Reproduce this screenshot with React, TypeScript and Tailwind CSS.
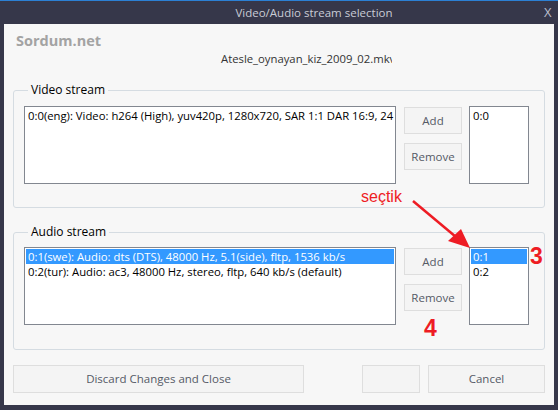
import React from 'react';

const ui = { fontFamily: '"Open Sans", "Noto Sans", sans-serif' };
const mark = { fontFamily: '"Liberation Sans", Arial, sans-serif' };

function ListBox({ rows, selected, wide }: { rows: string[]; selected?: number; wide?: boolean }) {
  return (
    <div className={`${wide ? 'w-[372px]' : 'w-[60px]'} h-[78px] bg-white border border-[#828790] overflow-hidden p-px`}>
      {rows.map((r, i) => (
        <div
          key={i}
          className={`h-[15px] leading-[15px] pl-[2px] whitespace-nowrap text-[11.3px] ${i === selected ? 'bg-[#3399ff] text-white' : 'text-black'}`}
        >
          {r}
        </div>
      ))}
    </div>
  );
}

function Btn({ label, className }: { label: string; className: string }) {
  return (
    <div className={`flex items-center justify-center bg-[#f4f4f4] border border-[#dedede] text-[11.5px] text-[#555a66] ${className}`}>
      {label}
    </div>
  );
}

function Group({ title, list, side, sel, top }: { title: string; list: string[]; side: string[]; sel?: number; top: string }) {
  return (
    <fieldset className="w-[532px] h-[126px] border border-[#d5dce2] rounded-[3px] ml-[9px] px-[10px]">
      <legend className="ml-[4px] px-[3px] text-[12px] text-black leading-[16px]">{title}</legend>
      <div className={`flex ${top}`}>
        <ListBox rows={list} selected={sel} wide />
        <div className="flex flex-col gap-[9px] ml-[8px] w-[58px] h-[78px]">
          <Btn label="Add" className="h-[27px] mt-px" />
          <Btn label="Remove" className="h-[27px]" />
        </div>
        <div className="ml-[7px]">
          <ListBox rows={side} selected={sel} />
        </div>
      </div>
    </fieldset>
  );
}

export default function App() {
  return (
    <div className="w-[558px] h-[410px] bg-[#36374a] border-t border-[#2c80d4] flex flex-col relative" style={ui}>
      <div className="h-[23px] flex items-center relative">
        <div className="flex-1 text-center text-[11.5px] text-[#c9ccd6] pl-[84px]">Video/Audio stream selection</div>
        <div className="w-[14px] text-[13px] text-[#b9bdcc]">X</div>
      </div>
      <div className="ml-[4px] w-[550px] h-[381px] bg-[#f7f7f7] relative">
        <div className="pl-[12px] pt-[7px] text-[14.5px] font-bold text-[#a3a3a3] leading-[20px]">Sordum.net</div>
        <div className="pl-[217px] text-[11.3px] text-[#333] leading-[16px] w-[388px] overflow-hidden whitespace-nowrap">
          Atesle_oynayan_kiz_2009_02.mkv
        </div>
        <div className="mt-[15px]">
          <Group
            title="Video stream"
            list={['0:0(eng): Video: h264 (High), yuv420p, 1280x720, SAR 1:1 DAR 16:9, 24 fps']}
            side={['0:0']}
            top="mt-[8px]"
          />
        </div>
        <div className="mt-[16px]">
          <Group
            title="Audio stream"
            list={[
              '0:1(swe): Audio: dts (DTS), 48000 Hz, 5.1(side), fltp, 1536 kb/s',
              '0:2(tur): Audio: ac3, 48000 Hz, stereo, fltp, 640 kb/s (default)',
            ]}
            side={['0:1', '0:2']}
            sel={0}
            top="mt-[7px]"
          />
        </div>
        <div className="flex mt-[15px] px-[9px]">
          <Btn label="Discard Changes and Close" className="w-[291px] h-[28px]" />
          <Btn label="" className="w-[58px] h-[28px] ml-[58px]" />
          <Btn label="Cancel" className="w-[117px] h-[28px] ml-[8px]" />
        </div>
      </div>

      {/* red annotations drawn over the dialog */}
      <div className="absolute left-[361px] top-[186px] text-[16px] text-[#ee1c24] leading-[20px]" style={mark}>
        seçtik
      </div>
      <svg className="absolute left-0 top-0" width="558" height="410">
        <line x1="413" y1="200" x2="462" y2="241" stroke="#ee1c24" strokeWidth="2.5" />
        <polygon points="470,247 448,240 461,228" fill="#ee1c24" />
      </svg>
      <div className="absolute left-[530px] top-[242px] text-[23px] font-bold text-[#ee1c24] leading-[26px]" style={mark}>
        3
      </div>
      <div className="absolute left-[424px] top-[314px] text-[23px] font-bold text-[#ee1c24] leading-[26px]" style={mark}>
        4
      </div>
    </div>
  );
}
